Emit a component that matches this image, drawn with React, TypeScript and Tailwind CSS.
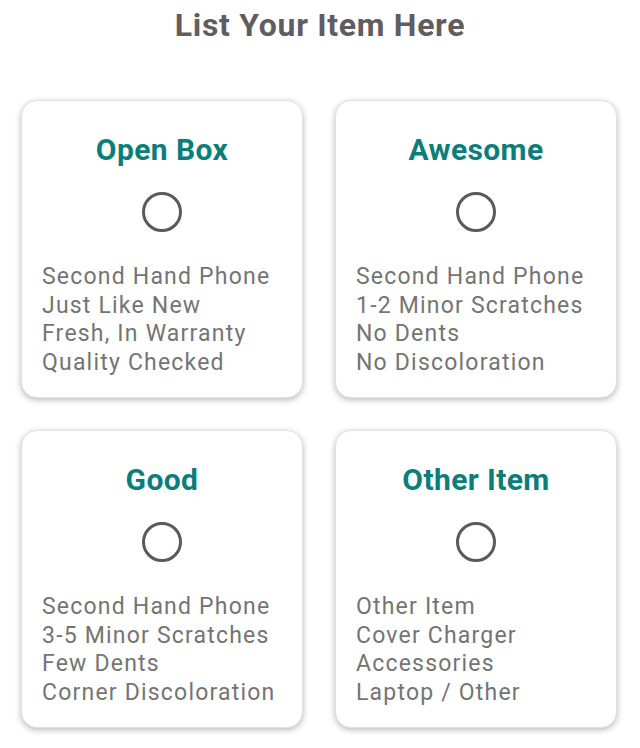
import React from "react";

const cards = [
  { title: "Open Box", lines: ["Second Hand Phone", "Just Like New", "Fresh, In Warranty", "Quality Checked"] },
  { title: "Awesome", lines: ["Second Hand Phone", "1-2 Minor Scratches", "No Dents", "No Discoloration"] },
  { title: "Good", lines: ["Second Hand Phone", "3-5 Minor Scratches", "Few Dents", "Corner Discoloration"] },
  { title: "Other Item", lines: ["Other Item", "Cover Charger", "Accessories", "Laptop / Other"] },
];

export default function App() {
  return (
    <div className="w-[640px] h-[748px] bg-white font-['Roboto',sans-serif]">
      <h1 className="pt-[6px] text-center text-[32px] leading-[38px] font-bold tracking-[0.7px] text-[#5f5d61]">
        List Your Item Here
      </h1>
      <div className="mt-[56px] grid grid-cols-[282px_282px] gap-x-[32px] gap-y-[32px] pl-[21px]">
        {cards.map((c) => (
          <div
            key={c.title}
            className="h-[298px] rounded-[16px] border border-[#e2e2e2] bg-white shadow-[0_2px_6px_rgba(0,0,0,0.28)] pt-[31px] px-[20px] flex flex-col"
          >
            <div className="text-center text-[30px] leading-[36px] font-bold tracking-[0.4px] text-[#0b7e7a]">{c.title}</div>
            <div className="mt-[24px] mx-auto w-[40px] h-[40px] rounded-full border-[3px] border-[#5a5a5a]" />
            <div className="mt-[31px] text-[23px] leading-[28.5px] text-[#747474] tracking-[1.2px]">
              {c.lines.map((l) => (
                <div key={l}>{l}</div>
              ))}
            </div>
          </div>
        ))}
      </div>
    </div>
  );
}
